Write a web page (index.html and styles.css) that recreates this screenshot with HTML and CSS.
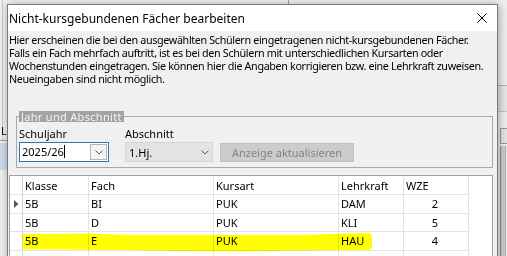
FILE: index.html
```html
<!DOCTYPE html>
<html lang="de">
<head>
  <meta charset="UTF-8" />
  <title>Nicht-kursgebundenen Fächer bearbeiten</title>
  <link rel="stylesheet" href="styles.css">
</head>
<body>
  <!-- Hauptfenster im Hintergrund (nur Ränder sichtbar) -->
  <div id="backdrop">
    <div class="bg-vline"></div>
    <div class="bg-topline"></div>
    <div class="bg-label">L</div>
    <div class="bg-sel"></div>
    <div class="bg-hline"></div>
    <div class="bg-hline2"></div>
    <div class="bg-box"></div>
    <div class="bg-scroll"></div>
  </div>

  <!-- Dialog -->
  <div id="dialog">
    <div id="titlebar">
      <span class="title">Nicht-kursgebundenen Fächer bearbeiten</span>
      <svg class="close" width="10" height="10" viewBox="0 0 10 10">
        <path d="M0.5 0.5 L9.5 9.5 M9.5 0.5 L0.5 9.5" stroke="#000" stroke-width="1" fill="none" />
      </svg>
    </div>

    <div id="content">
      <p id="intro">
        Hier erscheinen die bei den ausgewählten Schülern eingetragenen nicht-kursgebundenen Fächer.<br>
        Falls ein Fach mehrfach auftritt, ist es bei den Schülern mit unterschiedlichen Kursarten oder<br>
        Wochenstunden eingetragen. Sie können hier die Angaben korrigieren bzw. eine Lehrkraft zuweisen.<br>
        Neueingaben sind nicht möglich.
      </p>

      <fieldset id="period">
        <legend>Jahr und Abschnitt</legend>
        <div class="field">
          <label>Schuljahr</label>
          <div class="combo edit">
            <span class="value">2025/26<span class="caret"></span></span>
            <span class="drop">
              <svg width="8" height="5" viewBox="0 0 8 5"><path d="M0.5 0.5 L4 4 L7.5 0.5" stroke="#606060" fill="none" /></svg>
            </span>
          </div>
        </div>
        <div class="field">
          <label>Abschnitt</label>
          <div class="combo list">
            <span class="value">1.Hj.</span>
            <svg class="chev" width="8" height="5" viewBox="0 0 8 5"><path d="M0.5 0.5 L4 4 L7.5 0.5" stroke="#606060" fill="none" /></svg>
          </div>
        </div>
        <button disabled>Anzeige aktualisieren</button>
      </fieldset>

      <div id="grid">
        <div class="row head">
          <div class="rh"></div>
          <div class="cell">Klasse</div>
          <div class="cell">Fach</div>
          <div class="cell">Kursart</div>
          <div class="cell">Lehrkraft</div>
          <div class="cell">WZE</div>
        </div>
        <div class="row">
          <div class="rh">
            <svg width="5" height="8" viewBox="0 0 5 8"><path d="M0 0 L4.5 4 L0 8 Z" fill="#555" /></svg>
          </div>
          <div class="cell">5B</div>
          <div class="cell">BI</div>
          <div class="cell">PUK</div>
          <div class="cell">DAM</div>
          <div class="cell num">2</div>
        </div>
        <div class="row">
          <div class="rh"></div>
          <div class="cell">5B</div>
          <div class="cell">D</div>
          <div class="cell">PUK</div>
          <div class="cell">KLI</div>
          <div class="cell num">5</div>
        </div>
        <div class="row">
          <div class="rh"></div>
          <div class="cell">5B</div>
          <div class="cell">E</div>
          <div class="cell">PUK</div>
          <div class="cell">HAU</div>
          <div class="cell num">4</div>
        </div>
        <div class="row">
          <div class="rh"></div>
          <div class="cell">5B</div>
          <div class="cell">GEO</div>
          <div class="cell">PUK</div>
          <div class="cell">WVV</div>
          <div class="cell num">2</div>
        </div>

        <!-- Textmarker über der dritten Zeile -->
        <svg class="marker" width="484" height="80" viewBox="0 0 484 80">
          <polygon fill="#ffff00" points="13,58 79,57.5 121,59 191,59 291,59 321,58 359,57 362,59 362,72 359,74 291,74.5 231,75.5 171,75 111,74 51,73.5 13,73.5" />
        </svg>
      </div>
    </div>
  </div>
</body>
</html>
```

FILE: styles.css
```css
/* Grundlayout: Windows-Dialog über dem Hauptfenster */
html, body {
  margin: 0;
  padding: 0;
}
body {
  position: relative;
  width: 507px;
  height: 256px;
  overflow: hidden;
  background: #f0f0f0;
  font-family: "Noto Sans", sans-serif;
  font-size: 11px;
  color: #000;
}

/* Reste des Hauptfensters */
.bg-vline {
  position: absolute;
  left: 2px;
  top: 0;
  width: 1px;
  height: 140px;
  background: #c8c8c8;
}
.bg-topline {
  position: absolute;
  left: 288px;
  top: 0;
  width: 1px;
  height: 4px;
  background: #a0a0a0;
}
.bg-label {
  position: absolute;
  left: 1px;
  top: 124px;
  line-height: 13px;
}
.bg-hline {
  position: absolute;
  left: 0;
  top: 140px;
  width: 8px;
  height: 1px;
  background: #a0a0a0;
}
.bg-sel {
  position: absolute;
  left: 0;
  top: 143px;
  width: 8px;
  height: 27px;
  background: #cddbe9;
}
.bg-hline2 {
  position: absolute;
  left: 498px;
  top: 85px;
  width: 9px;
  height: 25px;
  border-top: 1px solid #b4b4b4;
  border-bottom: 1px solid #c8c8c8;
  background: #e8e8e8;
}
.bg-box {
  position: absolute;
  left: 500px;
  top: 128px;
  width: 6px;
  height: 14px;
  border: 1px solid #9a9a9a;
  background: #e6e6e6;
}
.bg-scroll {
  position: absolute;
  left: 500px;
  top: 146px;
  width: 4px;
  height: 120px;
  border-left: 1px solid #8c8c8c;
  border-right: 1px solid #b0b0b0;
  background: #cfcfcf;
}

/* Dialogfenster */
#dialog {
  position: absolute;
  left: 7px;
  top: 4px;
  width: 489px;
  height: 260px;
  border: 1px solid #7a7a7a;
  background: #f0f0f0;
  box-shadow: 1px 1px 9px rgba(0, 0, 0, 0.35);
  overflow: hidden;
}
#titlebar {
  height: 26px;
  background: #fff;
  display: flex;
  align-items: center;
  padding-left: 1px;
  font-size: 12px;
  white-space: nowrap;
}
.close {
  margin-left: auto;
  margin-right: 10px;
}

#content {
  padding: 0 4px 0 1px;
}
#intro {
  margin: 3px 0 0;
  font-size: 10.75px;
  line-height: 13px;
  white-space: nowrap;
  letter-spacing: -0.35px;
}

/* Gruppe "Jahr und Abschnitt" */
#period {
  margin: 25px 0 7px 7px;
  padding: 5px 2px 5px 2px;
  border: 1px solid #a9a9a9;
  display: flex;
  align-items: flex-end;
  min-width: 0;
}
#period legend {
  margin-left: 0;
  padding: 0 2px 0 2px;
  line-height: 11px;
  letter-spacing: 0.3px;
  background: #a3a3a3;
  color: #f4f4f4;
}
.field {
  display: flex;
  flex-direction: column;
  margin-right: 16px;
}
.field label {
  line-height: 13px;
  margin-bottom: 2px;
}
.combo {
  box-sizing: border-box;
  height: 20px;
  display: flex;
  align-items: center;
}
.combo.edit {
  width: 90px;
  border: 1px solid #3d6ea5;
  background: #fff;
  padding: 0 0 0 2px;
}
.combo.edit .value {
  flex: 1;
  line-height: 16px;
}
.caret {
  display: inline-block;
  width: 1px;
  height: 13px;
  background: #000;
  vertical-align: -2px;
}
.drop {
  box-sizing: border-box;
  width: 17px;
  height: 16px;
  margin-right: 1px;
  border: 1px solid #b5b5b5;
  background: #f4f4f4;
  display: flex;
  align-items: center;
  justify-content: center;
}
.combo.list {
  width: 88px;
  border: 1px solid #d4d4d4;
  background: #e3e3e3;
  padding: 0 3px 0 3px;
}
.combo.list .value {
  flex: 1;
}
#period button {
  box-sizing: border-box;
  width: 134px;
  height: 19px;
  margin-left: -9px;
  padding: 0;
  border: 1px solid #bfbfbf;
  background: #cccccc;
  color: #838383;
  font-family: inherit;
  font-size: 11px;
}

/* Datentabelle */
#grid {
  position: relative;
  height: 90px;
  border: 1px solid #a0a0a0;
  border-bottom: none;
  background: #fff;
  overflow: hidden;
}
.row {
  display: grid;
  grid-template-columns: 13px 66px 125px 125px 65px 65px;
  height: 18.5px;
  box-sizing: border-box;
  border-bottom: 1px solid #e3e3e3;
  width: 459px;
}
.row.head {
  height: 19px;
}
.rh {
  border-right: 1px solid #cfcfcf;
  display: flex;
  align-items: center;
  justify-content: center;
}
.cell {
  padding-left: 2px;
  border-right: 1px solid #e3e3e3;
  display: flex;
  align-items: center;
  white-space: nowrap;
}
.cell.num {
  justify-content: flex-end;
  padding-right: 30px;
}
.marker {
  position: absolute;
  left: 0;
  top: 0;
  mix-blend-mode: multiply;
  pointer-events: none;
}
```
